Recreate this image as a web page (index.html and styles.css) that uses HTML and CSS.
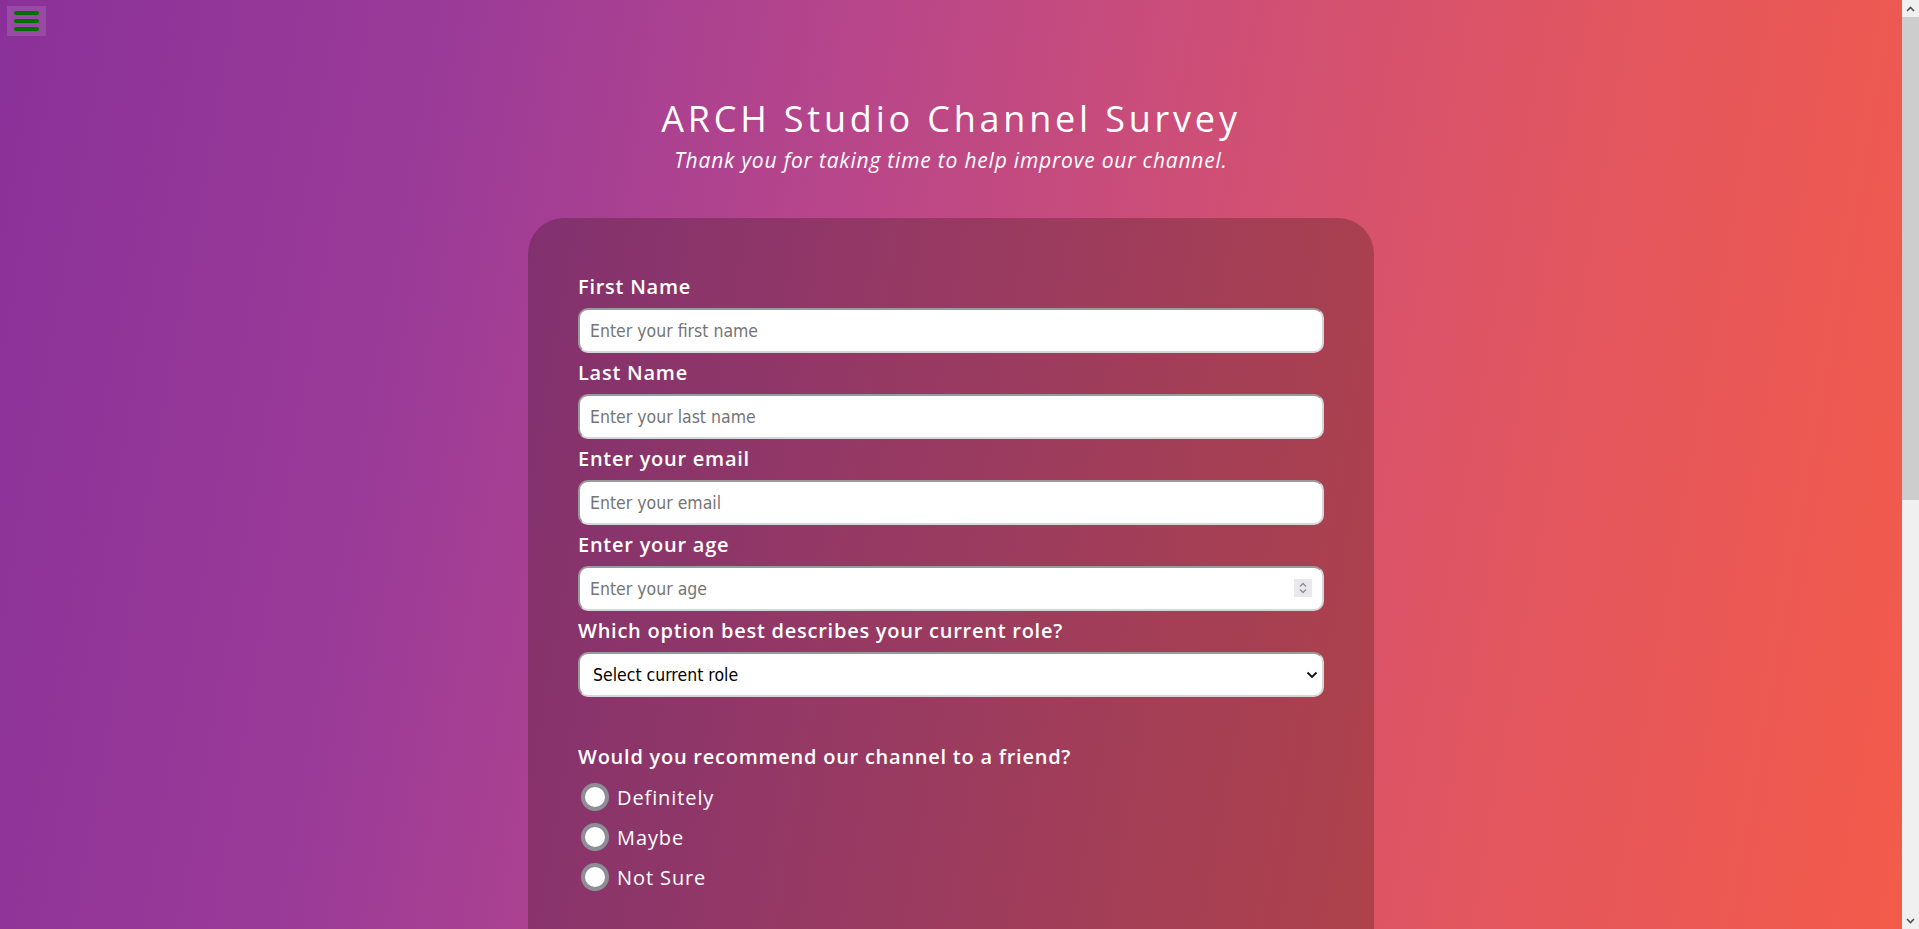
FILE: index.html
```html
<!DOCTYPE html>
<html lang="en">
<head>
<meta charset="utf-8">
<title>ARCH Studio Channel Survey</title>
<link rel="stylesheet" href="styles.css">
</head>
<body>
<button class="menu-btn" type="button" aria-label="Menu">
  <span class="menu-bar"></span>
  <span class="menu-bar"></span>
  <span class="menu-bar"></span>
</button>

<header class="header">
  <h1 class="title">ARCH Studio Channel Survey</h1>
  <p class="subtitle">Thank you for taking time to help improve our channel.</p>
</header>

<main class="card">
  <form class="survey">
    <div class="group">
      <label class="label" for="first">First Name</label>
      <input class="field" id="first" type="text" placeholder="Enter your first name">
    </div>
    <div class="group">
      <label class="label" for="last">Last Name</label>
      <input class="field" id="last" type="text" placeholder="Enter your last name">
    </div>
    <div class="group">
      <label class="label" for="email">Enter your email</label>
      <input class="field" id="email" type="email" placeholder="Enter your email">
    </div>
    <div class="group">
      <label class="label" for="age">Enter your age</label>
      <div class="field-wrap">
        <input class="field" id="age" type="number" placeholder="Enter your age">
        <span class="spinner" aria-hidden="true">
          <svg width="18" height="18" viewBox="0 0 18 18"><path d="M6 7.5 9 4.5 12 7.5M6 10.5 9 13.5 12 10.5" fill="none" stroke="#8c8c96" stroke-width="1.3"/></svg>
        </span>
      </div>
    </div>
    <div class="group">
      <label class="label" for="role">Which option best describes your current role?</label>
      <div class="field-wrap">
        <select class="field select" id="role">
          <option>Select current role</option>
          <option>Student</option>
          <option>Full Time Job</option>
          <option>Full Time Learner</option>
          <option>Prefer not to say</option>
          <option>Other</option>
        </select>
        <span class="select-arrow" aria-hidden="true">
          <svg width="12" height="8" viewBox="0 0 12 8"><path d="M1.5 1.5 6 6 10.5 1.5" fill="none" stroke="#111" stroke-width="1.8"/></svg>
        </span>
      </div>
    </div>

    <fieldset class="question">
      <legend class="label">Would you recommend our channel to a friend?</legend>
      <label class="choice"><input class="radio" type="radio" name="rec"> Definitely</label>
      <label class="choice"><input class="radio" type="radio" name="rec"> Maybe</label>
      <label class="choice"><input class="radio" type="radio" name="rec"> Not Sure</label>
    </fieldset>

    <fieldset class="question">
      <legend class="label">What would you like to see improved? (Check all that apply)</legend>
      <label class="choice"><input class="check" type="checkbox"> Front-end Projects</label>
      <label class="choice"><input class="check" type="checkbox"> Back-end Projects</label>
      <label class="choice"><input class="check" type="checkbox"> Data Visualization</label>
      <label class="choice"><input class="check" type="checkbox"> Challenges</label>
      <label class="choice"><input class="check" type="checkbox"> Open Source Community</label>
      <label class="choice"><input class="check" type="checkbox"> Videos</label>
    </fieldset>

    <div class="group">
      <label class="label" for="comments">Any comments or suggestions?</label>
      <textarea class="field area" id="comments" placeholder="Enter your comment here..."></textarea>
    </div>

    <button class="submit" type="submit">Submit</button>
  </form>
</main>

<div class="scrollbar" aria-hidden="true">
  <span class="sb-btn">
    <svg width="9" height="6" viewBox="0 0 9 6"><path d="M1 5 4.5 1.5 8 5" fill="none" stroke="#505050" stroke-width="1.6"/></svg>
  </span>
  <span class="sb-thumb"></span>
  <span class="sb-track"></span>
  <span class="sb-btn">
    <svg width="9" height="6" viewBox="0 0 9 6"><path d="M1 1 4.5 4.5 8 1" fill="none" stroke="#505050" stroke-width="1.6"/></svg>
  </span>
</div>
</body>
</html>
```
FILE: styles.css
```css
* {
  box-sizing: border-box;
}

html {
  min-height: 100%;
}

body {
  margin: 0;
  padding-right: 17px;
  font-family: "Open Sans", "Liberation Sans", sans-serif;
  color: #fff;
  background: linear-gradient(100deg, #8a3199 0%, #9b3b98 22%, #b8468a 42%, #cf4f75 60%, #e2565f 78%, #f45b49 100%) fixed;
}

.scrollbar {
  position: fixed;
  top: 0;
  right: 0;
  width: 17px;
  height: 100vh;
  background: #f0f0f0;
  display: flex;
  flex-direction: column;
}

.sb-btn {
  height: 17px;
  flex: none;
  display: flex;
  align-items: center;
  justify-content: center;
}

.sb-thumb {
  height: 483px;
  flex: none;
  background: #cdcdcd;
}

.sb-track {
  flex: 1;
}

.menu-btn {
  position: absolute;
  top: 6px;
  left: 7px;
  width: 39px;
  height: 30px;
  padding: 0;
  border: none;
  background: rgba(255, 255, 255, 0.12);
  display: flex;
  flex-direction: column;
  align-items: center;
  justify-content: center;
  gap: 4px;
  cursor: pointer;
}

.menu-bar {
  display: block;
  width: 25px;
  height: 4px;
  border-radius: 2px;
  background: #007000;
}

.header {
  padding-top: 98px;
  text-align: center;
}

.title {
  margin: 0;
  font-size: 36px;
  line-height: 42px;
  font-weight: 400;
  letter-spacing: 3.8px;
}

.subtitle {
  margin: 8px 0 0;
  font-size: 21px;
  line-height: 24px;
  font-style: italic;
  letter-spacing: 0.8px;
}

.card {
  width: 846px;
  min-height: 1452px;
  margin: 46px auto 50px;
  padding: 57px 50px 60px;
  border-radius: 36px;
  background: rgba(30, 10, 0, 0.25);
}

.survey {
  display: flex;
  flex-direction: column;
}

.group {
  display: flex;
  flex-direction: column;
  margin-bottom: 8px;
}

.label {
  display: block;
  font-size: 20px;
  line-height: 24px;
  font-weight: 600;
  letter-spacing: 0.75px;
  margin-bottom: 9px;
  padding: 0;
}

.field-wrap {
  position: relative;
}

.field {
  width: 100%;
  height: 45px;
  padding: 0 10px;
  border-width: 2px;
  border-style: solid;
  border-color: #9a9a9a #d6d6d6 #d6d6d6 #9a9a9a;
  border-radius: 10px;
  background: #fff;
  font-family: "DejaVu Sans Condensed", "DejaVu Sans", sans-serif;
  font-size: 17.5px;
  color: #000;
}

.field::placeholder {
  color: #757575;
}

.field::-webkit-inner-spin-button,
.field::-webkit-outer-spin-button {
  -webkit-appearance: none;
  margin: 0;
}

.spinner {
  position: absolute;
  right: 12px;
  top: 13px;
  width: 18px;
  height: 18px;
  background: #e9e9ed;
  display: flex;
  pointer-events: none;
}

.select {
  appearance: none;
  -webkit-appearance: none;
  padding-left: 13px;
}

.select-arrow {
  position: absolute;
  right: 6px;
  top: 19px;
  width: 12px;
  height: 8px;
  display: flex;
  pointer-events: none;
}

.question {
  border: none;
  margin: 40px 0 0;
  padding: 0;
  min-width: 0;
}

.question .label {
  margin-bottom: 8px;
}

.choice {
  display: flex;
  align-items: center;
  gap: 8px;
  height: 40px;
  font-size: 20px;
  font-weight: 400;
  letter-spacing: 0.9px;
}

.radio,
.check {
  appearance: none;
  -webkit-appearance: none;
  width: 28px;
  height: 28px;
  margin: 0 0 0 3px;
  border: 4px solid #8e8e96;
  background: #fff;
  flex: none;
}

.radio {
  border-radius: 50%;
}

.check {
  border-radius: 6px;
}

.area {
  height: 120px;
  padding: 10px;
  resize: vertical;
}

.question + .group {
  margin-top: 40px;
}

.submit {
  margin-top: 40px;
  height: 50px;
  border: none;
  border-radius: 10px;
  background: #37af65;
  color: #fff;
  font-family: "Open Sans", sans-serif;
  font-size: 20px;
  font-weight: 600;
}
```
